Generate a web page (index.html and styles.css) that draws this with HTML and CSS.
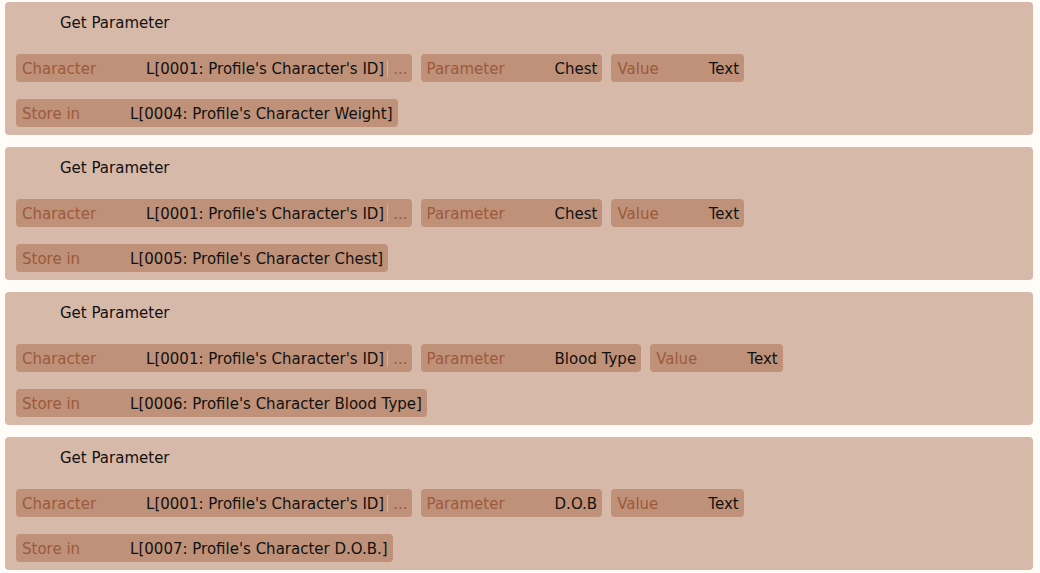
FILE: index.html
```html
<!DOCTYPE html>
<html lang="en">
<head>
<meta charset="utf-8">
<title>Get Parameter</title>
<link rel="stylesheet" href="styles.css">
</head>
<body>
<main class="list">
  <section class="step">
    <div class="step-title">Get Parameter</div>
    <div class="row">
      <div class="chip chip-wide"><span class="label">Character</span><span class="value">L[0001: Profile's Character's ID]</span><span class="sep"></span><span class="more">...</span></div>
      <div class="chip"><span class="label">Parameter</span><span class="value">Chest</span></div>
      <div class="chip"><span class="label">Value</span><span class="value">Text</span></div>
    </div>
    <div class="row">
      <div class="chip"><span class="label">Store in</span><span class="value">L[0004: Profile's Character Weight]</span></div>
    </div>
  </section>
  <section class="step">
    <div class="step-title">Get Parameter</div>
    <div class="row">
      <div class="chip chip-wide"><span class="label">Character</span><span class="value">L[0001: Profile's Character's ID]</span><span class="sep"></span><span class="more">...</span></div>
      <div class="chip"><span class="label">Parameter</span><span class="value">Chest</span></div>
      <div class="chip"><span class="label">Value</span><span class="value">Text</span></div>
    </div>
    <div class="row">
      <div class="chip"><span class="label">Store in</span><span class="value">L[0005: Profile's Character Chest]</span></div>
    </div>
  </section>
  <section class="step">
    <div class="step-title">Get Parameter</div>
    <div class="row">
      <div class="chip chip-wide"><span class="label">Character</span><span class="value">L[0001: Profile's Character's ID]</span><span class="sep"></span><span class="more">...</span></div>
      <div class="chip"><span class="label">Parameter</span><span class="value">Blood Type</span></div>
      <div class="chip"><span class="label">Value</span><span class="value">Text</span></div>
    </div>
    <div class="row">
      <div class="chip"><span class="label">Store in</span><span class="value">L[0006: Profile's Character Blood Type]</span></div>
    </div>
  </section>
  <section class="step">
    <div class="step-title">Get Parameter</div>
    <div class="row">
      <div class="chip chip-wide"><span class="label">Character</span><span class="value">L[0001: Profile's Character's ID]</span><span class="sep"></span><span class="more">...</span></div>
      <div class="chip"><span class="label">Parameter</span><span class="value">D.O.B</span></div>
      <div class="chip"><span class="label">Value</span><span class="value">Text</span></div>
    </div>
    <div class="row">
      <div class="chip"><span class="label">Store in</span><span class="value">L[0007: Profile's Character D.O.B.]</span></div>
    </div>
  </section>
</main>
</body>
</html>
```

FILE: styles.css
```css
html, body {
  margin: 0;
  padding: 0;
  background: #fffcf7;
}

body {
  font-family: "DejaVu Sans", Verdana, sans-serif;
  font-size: 15px;
  color: #111;
}

.list {
  display: flex;
  flex-direction: column;
  gap: 12px;
  padding: 2px 7px 0 5px;
}

.step {
  background: #d7b9a9;
  border-radius: 4px;
  height: 133px;
  box-sizing: border-box;
  padding: 11px 11px 0 11px;
  display: flex;
  flex-direction: column;
}

.step-title {
  height: 20px;
  line-height: 20px;
  padding-left: 44px;
  margin-bottom: 21px;
}

.row {
  display: flex;
  gap: 9px;
  margin-bottom: 17px;
}

.chip {
  height: 28px;
  box-sizing: border-box;
  padding: 2px 5px 0 6px;
  display: flex;
  align-items: center;
  background: #bf9179;
  border-radius: 4px;
  white-space: nowrap;
}

.chip-wide {
  padding-right: 4px;
}

.label {
  color: #9c5a3c;
  margin-right: 50px;
}

.value {
  color: #111;
}

.sep {
  width: 1px;
  height: 17px;
  background: #d9ae96;
  margin: -2px 5px 0 3px;
}

.more {
  color: #9c5a3c;
}
```
